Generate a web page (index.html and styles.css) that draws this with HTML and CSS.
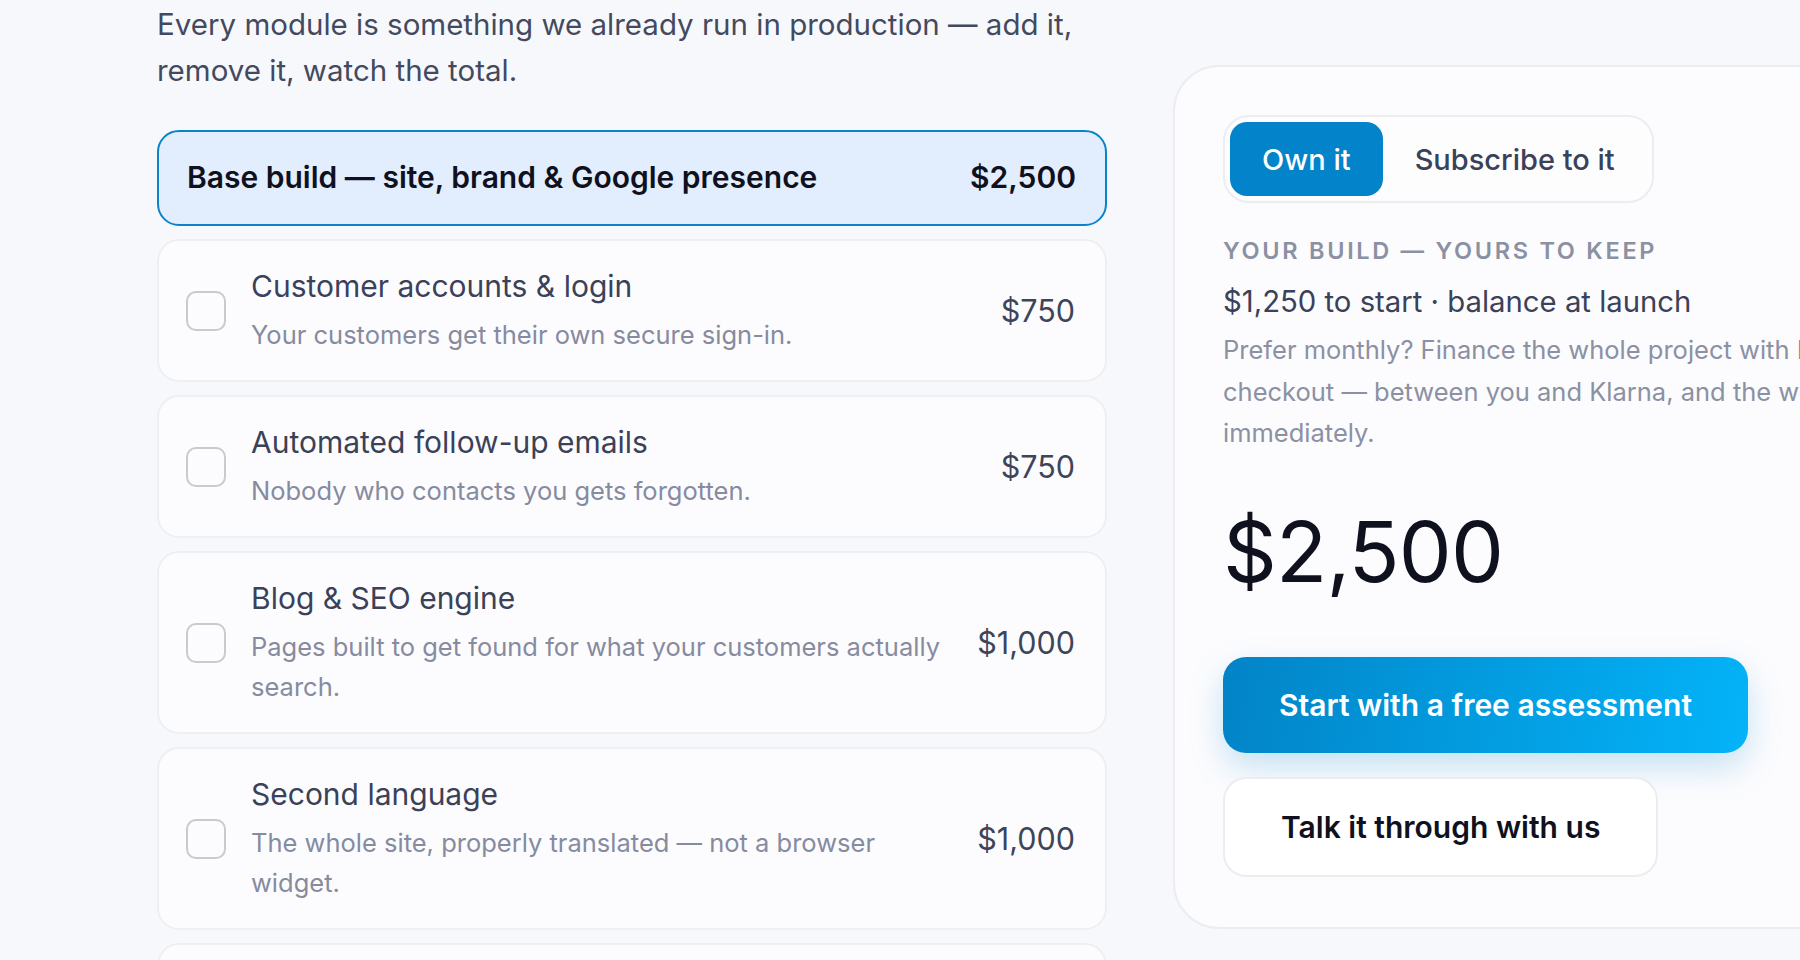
FILE: index.html
```html
<!DOCTYPE html>
<html lang="en">
<head>
<meta charset="utf-8">
<title>Build your package</title>
<link rel="stylesheet" href="styles.css">
</head>
<body>
<main class="builder">
  <section class="modules">
    <p class="intro">Every module is something we already run in production — add it, remove it, watch the total.</p>
    <div class="module-list">
      <div class="base-row">
        <span class="base-name">Base build — site, brand &amp; Google presence</span>
        <span class="base-price">$2,500</span>
      </div>
      <label class="module">
        <span class="check"></span>
        <span class="module-text">
          <span class="module-title">Customer accounts &amp; login</span>
          <span class="module-desc">Your customers get their own secure sign-in.</span>
        </span>
        <span class="module-price">$750</span>
      </label>
      <label class="module">
        <span class="check"></span>
        <span class="module-text">
          <span class="module-title">Automated follow-up emails</span>
          <span class="module-desc">Nobody who contacts you gets forgotten.</span>
        </span>
        <span class="module-price">$750</span>
      </label>
      <label class="module">
        <span class="check"></span>
        <span class="module-text">
          <span class="module-title">Blog &amp; SEO engine</span>
          <span class="module-desc">Pages built to get found for what your customers actually search.</span>
        </span>
        <span class="module-price">$1,000</span>
      </label>
      <label class="module">
        <span class="check"></span>
        <span class="module-text">
          <span class="module-title">Second language</span>
          <span class="module-desc">The whole site, properly translated — not a browser widget.</span>
        </span>
        <span class="module-price">$1,000</span>
      </label>
      <label class="module">
        <span class="check"></span>
        <span class="module-text">
          <span class="module-title">Online booking</span>
          <span class="module-desc">Customers pick a time that suits them.</span>
        </span>
        <span class="module-price">$750</span>
      </label>
    </div>
  </section>

  <aside class="summary">
    <div class="toggle">
      <button class="toggle-btn is-active">Own it</button>
      <button class="toggle-btn">Subscribe to it</button>
    </div>
    <div class="eyebrow">YOUR BUILD — YOURS TO KEEP</div>
    <div class="terms">$1,250 to start · balance at launch</div>
    <p class="note">Prefer monthly? Finance the whole project with Klarna at checkout — between you and Klarna, and the work starts immediately.</p>
    <div class="total">$2,500</div>
    <div class="actions">
      <a class="btn btn-primary" href="#">Start with a free assessment</a>
      <a class="btn btn-secondary" href="#">Talk it through with us</a>
    </div>
  </aside>
</main>
</body>
</html>
```
FILE: styles.css
```css
* { box-sizing: border-box; }

html, body {
  margin: 0;
  padding: 0;
  background: #f7f8fc;
  overflow: hidden;
  height: 960px;
}

body {
  font-family: "Inter", "Noto Sans", sans-serif;
  color: #3a4158;
}

.builder {
  display: grid;
  grid-template-columns: 950px 840px;
  column-gap: 66px;
  padding-left: 157px;
  width: 2100px;
  align-items: start;
}

.intro {
  margin: 1px 0 37px;
  font-size: 29.5px;
  line-height: 46px;
  color: #434a5f;
}

.module-list {
  display: flex;
  flex-direction: column;
  gap: 13px;
}

.base-row {
  display: flex;
  justify-content: space-between;
  align-items: center;
  height: 96px;
  padding: 0 29px 2px 28px;
  background: #e2edfd;
  border: 2px solid #0a84c9;
  border-radius: 22px;
  font-size: 30px;
  font-weight: 600;
  color: #10111e;
}

.module {
  display: flex;
  align-items: center;
  padding: 25px 30px 25px 27px;
  background: #fcfcfe;
  border: 2px solid #eeeff3;
  border-radius: 22px;
}

.check {
  flex: none;
  width: 40px;
  height: 40px;
  border: 2px solid #c9cacf;
  border-radius: 10px;
  background: #fcfcfe;
  margin-right: 25px;
}

.module-text {
  flex: 1;
  display: flex;
  flex-direction: column;
  gap: 9px;
  padding-right: 20px;
}

.module-title {
  font-size: 30px;
  line-height: 40px;
  color: #3a4158;
}

.module-desc {
  font-size: 25.5px;
  line-height: 40px;
  color: #868ba0;
}

.module-price {
  flex: none;
  font-size: 30.5px;
  color: #3e4559;
}

.summary {
  margin-top: 65px;
  padding: 48px 48px 50px;
  background: #fcfcfe;
  border: 2px solid #ececf1;
  border-radius: 46px;
  display: flex;
  flex-direction: column;
  align-items: flex-start;
}

.toggle {
  display: inline-flex;
  padding: 5px;
  border: 2px solid #ededf1;
  border-radius: 26px;
  background: #fdfdfe;
}

.toggle-btn {
  font-family: inherit;
  font-size: 29px;
  font-weight: 500;
  height: 74px;
  padding: 0 32px;
  border: 0;
  border-radius: 17px;
  background: transparent;
  color: #3a4158;
}

.toggle-btn.is-active {
  background: #0283ca;
  color: #ffffff;
}

.eyebrow {
  margin-top: 30px;
  font-size: 23.5px;
  line-height: 36px;
  font-weight: 600;
  letter-spacing: 0.115em;
  color: #8b90a3;
}

.terms {
  margin-top: 13px;
  font-size: 29.3px;
  line-height: 40px;
  color: #3a4158;
}

.note {
  margin: 7px 0 0;
  width: 740px;
  font-size: 25.5px;
  line-height: 41.5px;
  color: #8b90a3;
}

.total {
  margin-top: 43px;
  font-size: 84px;
  line-height: 110px;
  letter-spacing: -0.01em;
  color: #10111e;
}

.actions {
  margin-top: 50px;
  display: flex;
  flex-direction: column;
  align-items: flex-start;
  gap: 24px;
}

.btn {
  display: inline-flex;
  align-items: center;
  justify-content: center;
  text-decoration: none;
  font-size: 30px;
  font-weight: 600;
  border-radius: 23px;
}

.btn-primary {
  height: 96px;
  padding: 0 56px;
  color: #ffffff;
  background: linear-gradient(100deg, #0284c7 0%, #04b3f8 100%);
  box-shadow: 0 14px 34px rgba(2, 132, 199, 0.22);
}

.btn-secondary {
  height: 100px;
  padding: 0 56px;
  color: #10111e;
  background: #ffffff;
  border: 2px solid #ececf1;
}
```
